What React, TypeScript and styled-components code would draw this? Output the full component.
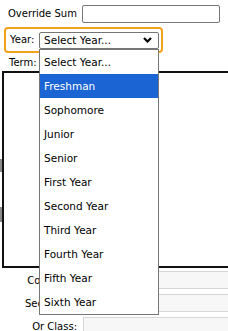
import React from 'react';
import styled, {createGlobalStyle} from 'styled-components';

const GlobalStyle = createGlobalStyle`
  html, body {
    margin: 0;
    padding: 0;
    background: #fff;
    overflow: hidden;
  }
  body {
    font-family: "DejaVu Sans", Verdana, sans-serif;
    font-size: 10px;
    color: #000;
  }
`;

const Page = styled.div`
  width: 228px;
  height: 331px;
  padding-top: 5px;
  box-sizing: border-box;
`;

const Row = styled.div<{indent: number; gap: number;}>`
  display: flex;
  align-items: center;
  padding-left: ${({indent}) => indent}px;
  gap: ${({gap}) => gap}px;
`;

const Label = styled.span`
  white-space: nowrap;
  line-height: 14px;
`;

const TextInput = styled.div<{width: number;}>`
  width: ${({width}) => width}px;
  height: 18px;
  box-sizing: border-box;
  border: 1px solid #767676;
  border-radius: 2px;
  background: #fff;
`;

const FocusRing = styled.div`
  display: flex;
  align-items: center;
  gap: 4px;
  margin: 4px 0 0 4px;
  width: 159px;
  height: 26px;
  box-sizing: border-box;
  padding: 0 2px 0 4px;
  border: 2px solid #f4a21c;
  border-radius: 4px;
`;

const SelectWrap = styled.div`
  position: relative;
  margin-left: auto;
`;

const SelectBox = styled.div`
  display: flex;
  align-items: center;
  justify-content: space-between;
  width: 120px;
  height: 17px;
  box-sizing: border-box;
  padding: 0 6px 0 4px;
  border: 1px solid #767676;
  border-radius: 2px;
  background: #fff;
  font-size: 10.5px;
`;

const Dropdown = styled.ul`
  position: absolute;
  top: 100%;
  left: 0;
  width: 120px;
  box-sizing: border-box;
  margin: 0;
  padding: 0;
  list-style: none;
  border: 1px solid #767676;
  background: #fff;
  z-index: 5;
`;

const Option = styled.li<{active?: boolean;}>`
  height: 24px;
  line-height: 24px;
  padding-left: 4px;
  font-size: 10.5px;
  background: ${({active}) => active ? '#1a64d3' : 'transparent'};
  color: ${({active}) => active ? '#fff' : '#000'};
`;

const TermRow = styled.div`
  padding-left: 9px;
  margin-top: 1px;
  height: 17px;
  line-height: 17px;
`;

const Frame = styled.div`
  display: flex;
  height: 197px;
`;

const Side = styled.div`
  display: flex;
  flex-direction: column;
  width: 5px;
  padding-top: 88px;
  gap: 35px;
`;

const Mark = styled.div<{h: number;}>`
  width: 2px;
  height: ${({h}) => h}px;
  background: #8a8a8a;
`;

const Box = styled.div`
  flex: none;
  width: 240px;
  box-sizing: border-box;
  border: 2px solid #111;
`;

const Fields = styled.div`
  display: flex;
  flex-direction: column;
  gap: 5px;
  margin-top: 3px;
`;

const FieldRow = styled.div`
  display: grid;
  grid-template-columns: 77px 160px;
  column-gap: 6px;
  align-items: center;
`;

const FieldLabel = styled.span`
  text-align: right;
  white-space: nowrap;
`;

const GreyInput = styled.div`
  height: 18px;
  box-sizing: border-box;
  border: 1px solid #d6d6d6;
  background: #f7f7f7;
`;

const years = [
  'Freshman', 'Sophomore', 'Junior', 'Senior', 'First Year', 'Second Year',
  'Third Year', 'Fourth Year', 'Fifth Year', 'Sixth Year',
];

function Chevron() {
  return (
    <svg width="9" height="6" viewBox="0 0 9 6">
      <polyline points="1,1 4.5,4.5 8,1" fill="none" stroke="#000"
        strokeWidth="2.2" />
    </svg>
  );
}

export default function App() {
  return (
    <Page>
      <GlobalStyle />
      <Row indent={8} gap={5}>
        <Label>Override Sum</Label>
        <TextInput width={138} />
      </Row>
      <FocusRing>
        <Label>Year:</Label>
        <SelectWrap>
          <SelectBox>
            <span>Select Year...</span>
            <Chevron />
          </SelectBox>
          <Dropdown>
            <Option>Select Year...</Option>
            {years.map((y, i) => (
              <Option key={y} active={i === 0}>{y}</Option>
            ))}
          </Dropdown>
        </SelectWrap>
      </FocusRing>
      <TermRow>Term:</TermRow>
      <Frame>
        <Side>
          <Mark h={13} />
          <Mark h={15} />
        </Side>
        <Box />
      </Frame>
      <Fields>
        <FieldRow>
          <FieldLabel>Course #:</FieldLabel>
          <GreyInput />
        </FieldRow>
        <FieldRow>
          <FieldLabel>Section #:</FieldLabel>
          <GreyInput />
        </FieldRow>
        <FieldRow>
          <FieldLabel>Or Class:</FieldLabel>
          <GreyInput />
        </FieldRow>
      </Fields>
    </Page>
  );
}
